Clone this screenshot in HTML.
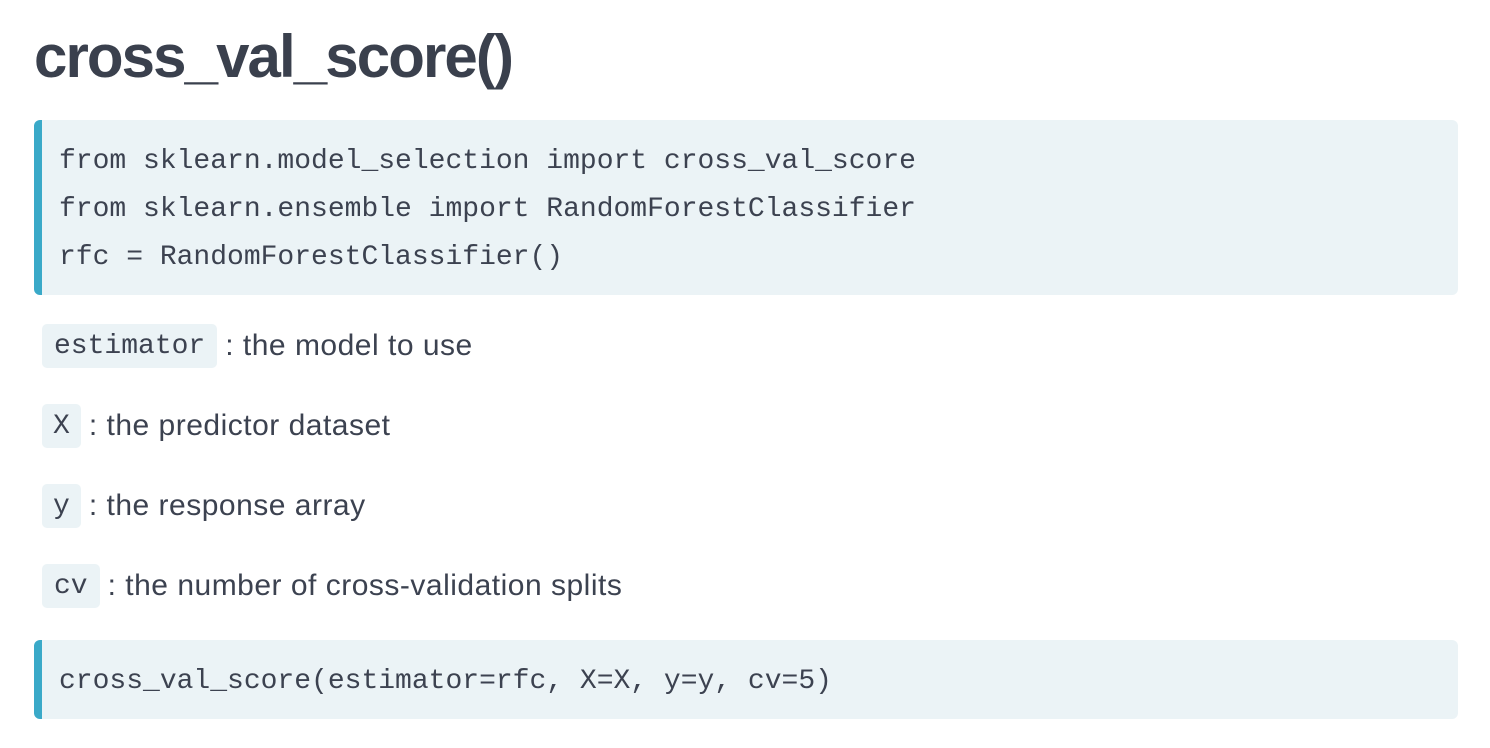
<!DOCTYPE html>
<html><head><meta charset="utf-8"><style>
html,body{margin:0;padding:0;background:#fff;width:1490px;height:748px;overflow:hidden}
body{font-family:"Liberation Sans",sans-serif;color:#3c4250;position:relative}
h1{position:absolute;left:34px;top:17px;margin:0;font-size:60px;font-weight:bold;letter-spacing:-1.9px;color:#3a404d;line-height:80px}
.block{position:absolute;left:34px;width:1424px;background:#ebf3f6;border-left:8px solid #3aa9c8;box-sizing:border-box;border-radius:6px;font-family:"Liberation Mono",monospace;font-size:28px;color:#3c4250;padding-left:17px}
.line{height:48px;line-height:48px;white-space:pre}
.row{position:absolute;left:42px;height:44px;line-height:44px;font-size:30px;letter-spacing:0.5px;white-space:pre}
code{display:inline-block;background:#ebf3f6;border-radius:5px;font-family:"Liberation Mono",monospace;font-size:28px;letter-spacing:0;padding:0 12px;height:44px;line-height:46px;vertical-align:top;margin-right:8px}
</style></head><body>
<h1>cross_val_score()</h1>
<div class="block" style="top:120px;height:175px;padding-top:18px">
<div class="line">from sklearn.model_selection import cross_val_score</div>
<div class="line">from sklearn.ensemble import RandomForestClassifier</div>
<div class="line">rfc = RandomForestClassifier()</div>
</div>
<div class="row" style="top:324px"><code>estimator</code>: the model to use</div>
<div class="row" style="top:404px"><code style="padding:0 11px">X</code>: the predictor dataset</div>
<div class="row" style="top:484px"><code style="padding:0 11px">y</code>: the response array</div>
<div class="row" style="top:564px"><code>cv</code>: the number of cross-validation splits</div>
<div class="block" style="top:640px;height:79px;padding-top:18px">
<div class="line">cross_val_score(estimator=rfc, X=X, y=y, cv=5)</div>
</div>
</body></html>
